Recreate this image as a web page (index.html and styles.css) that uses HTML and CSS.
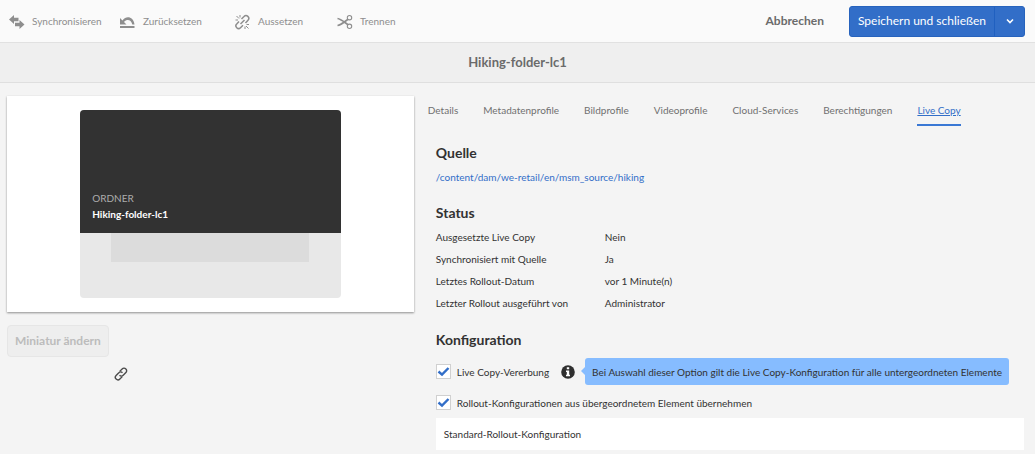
FILE: index.html
```html
<!DOCTYPE html>
<html lang="de">
<head>
<meta charset="utf-8">
<title>Hiking-folder-lc1</title>
<meta name="viewport" content="width=device-width, initial-scale=1">
<link rel="stylesheet" href="styles.css">
</head>
<body>
<header class="toolbar">
  <div class="tools">
    <button class="tool" type="button">
      <svg class="icon" viewBox="0 0 16 16" fill="currentColor" aria-hidden="true"><path d="M0 5.500 5 1v2.700h4.500v3.600H5V10z"/><path d="M15.500 10.500 10.500 6v2.700H6v3.600h4.500V15z"/></svg>
      <span>Synchronisieren</span>
    </button>
    <button class="tool" type="button">
      <svg class="icon" viewBox="0 0 16 16" aria-hidden="true"><path fill="currentColor" d="M0 4v6.500h6.500L4 8C7 4.800 11 5.500 12.300 10.500H14.500C13.500 3 6.500 1 2.500 6.500zM0 12h14.500v2H0z"/></svg>
      <span>Zurücksetzen</span>
    </button>
    <button class="tool" type="button">
      <svg class="icon" viewBox="0 0 16 16" fill="none" stroke="currentColor" stroke-width="1.500" aria-hidden="true"><path d="M6.500 5 9 2.500a2.600 2.600 0 0 1 4 3.700L10.500 9M4 7.500 1.700 10a2.600 2.600 0 0 0 3.800 3.700L8 11.200M5.500 10l4-4"/><path stroke-width="1" d="M5 1v2.500M1.500 2 4 4.500M.5 6H3M10 15v-2.500M13.500 14.500 11 12M14 10.500h-2.500"/></svg>
      <span>Aussetzen</span>
    </button>
    <button class="tool" type="button">
      <svg class="icon" viewBox="0 0 16 16" fill="none" stroke="currentColor" aria-hidden="true"><circle cx="12.500" cy="3.700" r="2.200" stroke-width="1.100"/><circle cx="12.500" cy="12.300" r="2.200" stroke-width="1.100"/><path stroke-width="1.700" d="M.5 4.500C4 5 7 8 11 10.700M.5 11.500C4 11 7 8 11 5.300"/></svg>
      <span>Trennen</span>
    </button>
  </div>
  <button class="cancel" type="button">Abbrechen</button>
  <div class="split">
    <button class="save" type="button">Speichern und schließen</button>
    <button class="more" type="button" aria-label="Weitere Optionen">
      <svg viewBox="0 0 8 8" width="8" height="8" fill="none" stroke="currentColor" stroke-width="1.600" aria-hidden="true"><path d="m1 2.500 3 3 3-3"/></svg>
    </button>
  </div>
</header>
<h1 class="title">Hiking-folder-lc1</h1>
<main class="content">
  <section class="side">
    <div class="preview">
      <article class="card">
        <div class="card-head">
          <span class="card-type">ORDNER</span>
          <strong class="card-name">Hiking-folder-lc1</strong>
        </div>
        <div class="card-foot"><div class="card-shade"></div></div>
      </article>
    </div>
    <button class="thumb" type="button" disabled>Miniatur ändern</button>
    <svg class="link-icon" viewBox="0 0 16 16" fill="none" stroke="currentColor" stroke-width="1.600" aria-hidden="true"><path d="M6.500 5 9.300 2.200a2.900 2.900 0 0 1 4.300 4.200L10.500 9.500a2.900 2.900 0 0 1-4.200 0"/><path d="M9.500 11 6.700 13.800a2.900 2.900 0 0 1-4.300-4.200L5.500 6.500a2.900 2.900 0 0 1 4.200 0"/></svg>
  </section>
  <section class="main">
    <nav class="tabs">
      <a href="#details">Details</a>
      <a href="#metadaten">Metadatenprofile</a>
      <a href="#bild">Bildprofile</a>
      <a href="#video">Videoprofile</a>
      <a href="#cloud">Cloud-Services</a>
      <a href="#rechte">Berechtigungen</a>
      <a class="active" href="#live" aria-current="page">Live Copy</a>
    </nav>
    <div class="panel">
      <h2>Quelle</h2>
      <a class="source" href="#source">/content/dam/we-retail/en/msm_source/hiking</a>
      <h2>Status</h2>
      <dl class="status">
        <dt>Ausgesetzte Live Copy</dt><dd>Nein</dd>
        <dt>Synchronisiert mit Quelle</dt><dd>Ja</dd>
        <dt>Letztes Rollout-Datum</dt><dd>vor 1 Minute(n)</dd>
        <dt>Letzter Rollout ausgeführt von</dt><dd>Administrator</dd>
      </dl>
      <h2>Konfiguration</h2>
      <div class="option">
        <input type="checkbox" id="inherit" checked>
        <label for="inherit">Live Copy-Vererbung</label>
        <svg class="info" viewBox="0 0 14 14" aria-hidden="true"><circle cx="7" cy="7" r="6.800" fill="#2f2f2f"/><path fill="#fff" d="M5.800 2.300h2.400v2H5.800zM5 5.500h3.200v4.300H9v1.500H5V9.800h.8V7H5z"/></svg>
        <div class="hint" role="tooltip">Bei Auswahl dieser Option gilt die Live Copy-Konfiguration für alle untergeordneten Elemente</div>
      </div>
      <div class="option">
        <input type="checkbox" id="rollout" checked>
        <label for="rollout">Rollout-Konfigurationen aus übergeordnetem Element übernehmen</label>
      </div>
      <div class="config">Standard-Rollout-Konfiguration</div>
    </div>
  </section>
</main>
</body>
</html>
```
FILE: styles.css
```css
* { box-sizing: border-box; }
body {
  margin: 0;
  background: #f4f4f4;
  color: #323232;
  font: 10px/16px Lato, "Open Sans", sans-serif;
}
button { font: inherit; cursor: pointer; }
h1, h2, dl, dd { margin: 0; }

.toolbar {
  display: flex;
  align-items: center;
  height: 43px;
  padding: 0 10px 0 9px;
  background: #fafafa;
  border-bottom: 1px solid #e1e1e1;
}
.tools {
  display: grid;
  grid-template-columns: 111px 115px 102px auto;
  margin-right: auto;
}
.tool {
  display: flex;
  align-items: center;
  gap: 7px;
  padding: 0;
  border: 0;
  background: none;
  color: #8e8e8e;
}
.icon { width: 16px; height: 16px; margin-top: 2px; }
.cancel {
  margin-right: 25px;
  padding: 0;
  border: 0;
  background: none;
  color: #6b6b6b;
  font-size: 12px;
  font-weight: 700;
}
.split {
  display: flex;
  height: 31px;
  border: 1px solid #2763bd;
  border-radius: 3px;
  background: #326ec8;
}
.split button {
  padding: 0 8px;
  border: 0;
  background: none;
  color: #fff;
  font-size: 12px;
}
.split .more {
  display: grid;
  place-items: center;
  width: 30px;
  border-left: 1px solid #2060c0;
}

.title {
  padding: 9px 0 10px;
  border-bottom: 1px solid #dfdfdf;
  background: #efefef;
  color: #6b6b6b;
  font-size: 13px;
  line-height: 20px;
  text-align: center;
}

.content {
  display: grid;
  grid-template-columns: minmax(0, 2fr) minmax(0, 3fr);
  padding: 13px 11px 3px 7px;
}
.preview {
  padding: 14px 18%;
  background: #fff;
  box-shadow: 0 1px 2px #8e8e8e;
}
.card {
  overflow: hidden;
  border-radius: 4px;
  background: #e8e8e8;
}
.card-head {
  display: flex;
  flex-direction: column;
  justify-content: flex-end;
  min-height: 123px;
  padding: 12px 12px 11px;
  background: #323232;
}
.card-type { color: #adadad; }
.card-name { color: #fff; }
.card-foot { padding: 0 12% 36px; }
.card-shade { height: 29px; background: #dcdcdc; }
.thumb {
  display: block;
  height: 32px;
  margin-top: 13px;
  padding: 0 7px;
  border: 1px solid #e6e6e6;
  border-radius: 4px;
  background: #eee;
  color: #bcbcbc;
  font-size: 12px;
  font-weight: 700;
}
.link-icon {
  display: block;
  width: 14px;
  height: 14px;
  margin: 10px 0 0 107px;
  color: #4b4b4b;
}

.main { padding-left: 14px; }
.tabs {
  display: flex;
  gap: 25px;
  white-space: nowrap;
}
.tabs a {
  padding: 6px 0;
  border-bottom: 2px solid transparent;
  color: #707070;
  text-decoration: none;
}
.tabs .active {
  border-color: #3a78d4;
  color: #326ec8;
  text-decoration: underline;
}
.panel { padding: 17px 0 0 8px; }
h2 {
  margin-bottom: 6px;
  font-size: 14px;
  line-height: 20px;
}
.source {
  display: block;
  margin-bottom: 18px;
  color: #326ec8;
  text-decoration: none;
}
.status {
  display: grid;
  grid-template-columns: 169px 1fr;
  row-gap: 6px;
  margin-bottom: 19px;
}
.option {
  display: flex;
  align-items: center;
  height: 31px;
  white-space: nowrap;
}
.option input {
  appearance: none;
  width: 15px;
  height: 15px;
  margin: 0 6px 0 0;
  border: 1px solid #d0d0d0;
  background: #fff url("data:image/svg+xml,%3Csvg xmlns='http://www.w3.org/2000/svg' viewBox='0 0 13 13'%3E%3Cpath d='M1.500 6.500 5 9.700 11.500 3' fill='none' stroke='%23326ec8' stroke-width='2.400'/%3E%3C/svg%3E");
}
.option input:not(:checked) { background: #fff; }
.info {
  width: 14px;
  height: 14px;
  margin: 0 10px 0 12px;
}
.hint {
  position: relative;
  padding: 6px 7px 5px;
  border-radius: 3px;
  background: #86bcff;
}
.hint::before {
  content: "";
  position: absolute;
  top: 9px;
  left: -4px;
  border: 4px solid transparent;
  border-left: 0;
  border-right-color: #86bcff;
}
.config {
  padding: 8px;
  background: #fff;
}
```
